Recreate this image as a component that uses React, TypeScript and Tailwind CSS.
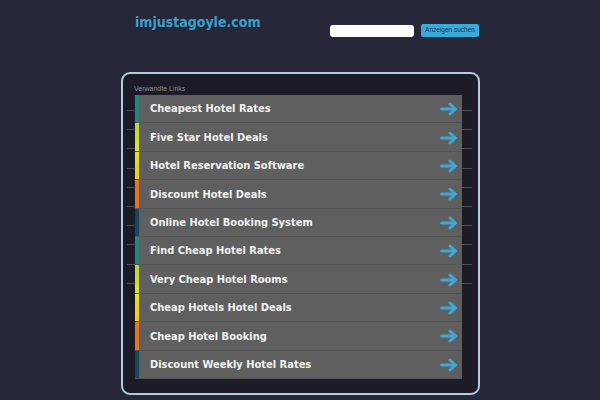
const links = [
  { label: "Cheapest Hotel Rates", bar: "bg-[#238a76]" },
  { label: "Five Star Hotel Deals", bar: "bg-[linear-gradient(#b5d43e,#d9e234)]" },
  { label: "Hotel Reservation Software", bar: "bg-[linear-gradient(#e9e02c,#f0c81e)]" },
  { label: "Discount Hotel Deals", bar: "bg-[#e8761a]" },
  { label: "Online Hotel Booking System", bar: "bg-[#154a5c]" },
  { label: "Find Cheap Hotel Rates", bar: "bg-[#238a76]" },
  { label: "Very Cheap Hotel Rooms", bar: "bg-[linear-gradient(#b5d43e,#d9e234)]" },
  { label: "Cheap Hotels Hotel Deals", bar: "bg-[linear-gradient(#e9e02c,#f0c81e)]" },
  { label: "Cheap Hotel Booking", bar: "bg-[#e8761a]" },
  { label: "Discount Weekly Hotel Rates", bar: "bg-[#154a5c]" },
];

const Arrow = () => (
  <svg width="18" height="14" viewBox="0 0 18 14" fill="none">
    <path
      d="M1.5 7H15M10 2l5.5 5-5.5 5"
      stroke="#3ea7d4"
      strokeWidth="3"
      strokeLinecap="round"
      strokeLinejoin="round"
    />
  </svg>
);

export default function App() {
  return (
    <div className="w-[600px] h-[400px] overflow-hidden bg-[#27273a] font-['DejaVu_Sans_Condensed','DejaVu_Sans',sans-serif]">
      {/* шапка */}
      <div className="flex items-start pl-[135px] pt-[12px] h-[72px]">
        <div className="w-[195px] text-[14px] font-bold text-[#3a9fcc]">
          imjustagoyle.com
        </div>
        <div className="flex items-center mt-[12px] gap-[7px]">
          <input className="w-[84px] h-[12px] bg-white rounded-[3px] outline-none" />
          <button className="w-[58px] h-[13px] bg-[#3aa8d8] rounded-[2px] text-[6.5px] leading-none text-[#17384e] font-['Liberation_Sans',sans-serif]">
            Anzeigen suchen
          </button>
        </div>
      </div>

      {/* панель со ссылками */}
      <div className="ml-[121px] w-[359px] h-[323px] border-2 border-[#b4cbe0] rounded-[9px] bg-[#1c1c28] pl-[12px] pt-[10px]">
        <div className="text-[7px] leading-[10px] text-[#8a8a94] font-['Liberation_Sans',sans-serif] -ml-[1px]">
          Verwandte Links
        </div>
        <div className="grid mt-[1px]">
          <div className="col-start-1 row-start-1 ml-[-8px] w-[345px] pt-[15px]">
            {Array.from({ length: 10 }).map((_, i) => (
              <div key={i} className="h-[19.2px] border-t border-[#4d4d58]" />
            ))}
          </div>
          <div className="col-start-1 row-start-1 w-[327px] flex flex-col self-start">
            {links.map((l) => (
              <div
                key={l.label}
                className="h-[28.4px] flex items-center bg-[#5f5f5f] border-b border-[#545454]"
              >
                <div className={`w-[4px] h-full ${l.bar}`} />
                <div className="flex-1 pl-[11px] pt-[2px] text-[11px] font-bold text-[#f2f2f2]">
                  {l.label}
                </div>
                <div className="pr-[4px] pt-[1px]">
                  <Arrow />
                </div>
              </div>
            ))}
          </div>
        </div>
      </div>
    </div>
  );
}
